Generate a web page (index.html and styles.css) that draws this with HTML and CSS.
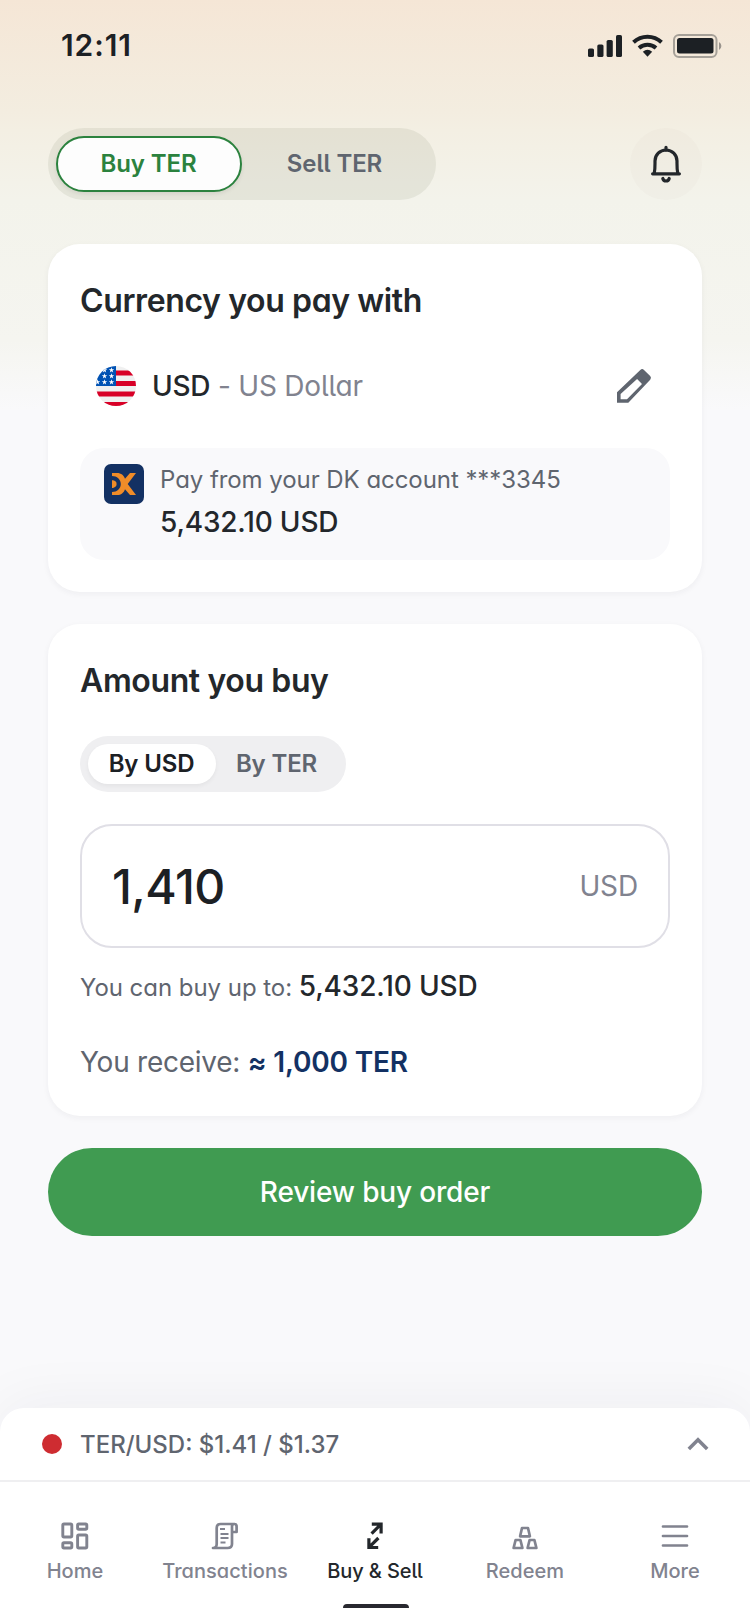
FILE: index.html
```html
<!DOCTYPE html>
<html lang="en">
<head>
<meta charset="utf-8">
<title>Buy TER</title>
<link rel="stylesheet" href="styles.css">
</head>
<body>
<div class="app">
  <header class="status">
    <span class="time">12:11</span>
    <svg class="status-icons" viewBox="0 0 136 26" width="136" height="26">
      <g fill="#1c2024">
        <rect x="0" y="15.500" width="6" height="8.500" rx="1.600"/>
        <rect x="9.300" y="11.500" width="6.200" height="12.500" rx="1.600"/>
        <rect x="18.600" y="7" width="6.200" height="17" rx="1.600"/>
        <rect x="28" y="2" width="6" height="22" rx="1.600"/>
      </g>
      <g fill="none" stroke="#1c2024" stroke-width="4">
        <path d="M45.500 9.300a20.600 20.600 0 0 1 28 0"/>
        <path d="M51 15a13 13 0 0 1 17 0"/>
      </g>
      <path d="M54.800 18.800a7.400 7.400 0 0 1 9.400 0l-4.700 5z" fill="#1c2024"/>
      <rect x="86" y="2" width="42.500" height="22" rx="5" fill="none" stroke="#1c2024" stroke-opacity=".36" stroke-width="2"/>
      <rect x="89" y="5" width="36.500" height="15.500" rx="2.500" fill="#1c2024"/>
      <path d="M131 9v8q2.400-1.500 2.400-4t-2.400-4z" fill="#1c2024" fill-opacity=".42"/>
    </svg>
  </header>

  <main class="content">
    <div class="topbar">
      <div class="tabs">
        <button class="tab tab-active">Buy TER</button>
        <button class="tab">Sell TER</button>
      </div>
      <button class="bell" aria-label="Notifications">
        <svg viewBox="0 0 36 40" width="36" height="40" fill="none" stroke="#23272b" stroke-width="3.200" stroke-linecap="round" stroke-linejoin="round">
          <path d="M18 3.300v3M4.600 29.800h26.800M6.200 29.500C7.200 25 7 22 7 17a11 11 0 0 1 22 0c0 5-.2 8 .8 12.500"/>
          <path d="M14.800 34.500a3.300 3.300 0 0 0 6.400 0"/>
        </svg>
      </button>
    </div>

    <section class="card">
      <h2 class="title">Currency you pay with</h2>
      <div class="currency">
        <svg class="flag" viewBox="0 0 40 40" width="40" height="40">
          <defs><clipPath id="round"><circle cx="20" cy="20" r="20"/></clipPath></defs>
          <g clip-path="url(#round)">
            <rect width="40" height="40" fill="#f0f0f0"/>
            <path d="M20 4.500h20v5H20zM20 15h20v5H20zM0 25.500h40v5H0zM0 36h40v4H0z" fill="#d80027"/>
            <rect width="20" height="20" fill="#0052b4"/>
            <path id="star" d="M15.500 1.300l.65 2h2.100l-1.700 1.200.65 2-1.700-1.200-1.700 1.200.65-2-1.700-1.200h2.100z" fill="#fff"/>
            <use href="#star" y="6"/><use href="#star" y="12"/>
            <use href="#star" x="-7" y="0"/><use href="#star" x="-7" y="6"/><use href="#star" x="-7" y="12"/>
            <use href="#star" x="-14" y="12"/>
          </g>
        </svg>
        <p class="currency-name"><b>USD</b> - US Dollar</p>
        <svg class="pencil" viewBox="0 0 36 36" width="36" height="36">
          <path fill-rule="evenodd" d="M1 24.300L24.300 1.900q1.900-1.600 3.700 0L34.200 8q1.600 1.900 0 3.700L12.300 34.700H1zM4.600 26v5.200H11L26 15.900 21.100 11z" fill="#5f656f"/>
        </svg>
      </div>
      <div class="account">
        <svg viewBox="0 0 40 40" width="40" height="40">
          <rect width="40" height="40" rx="7" fill="#133163"/>
          <g fill="#f08c28">
            <path d="M8 9h5c4.200 0 6.800 2.300 8 5.800L26 9h6l-8.300 11L32 31h-6l-5-5.800C19.800 28.700 17.200 31 13 31H8v-3c5 0 8.800-3.400 8.800-8S13 12 8 12z"/>
            <path d="M8 16.300h1q3.600.6 3.600 3.800t-3.600 3.800H8z"/>
          </g>
        </svg>
        <div>
          <p class="account-from">Pay from your DK account ***3345</p>
          <p class="account-sum">5,432.10 USD</p>
        </div>
      </div>
    </section>

    <section class="card card-amount">
      <h2 class="title">Amount you buy</h2>
      <div class="units">
        <button class="unit unit-active">By USD</button>
        <button class="unit">By TER</button>
      </div>
      <div class="field"><span class="value">1,410</span><span class="suffix">USD</span></div>
      <p class="limit">You can buy up to: <span>5,432.10 USD</span></p>
      <p class="receive">You receive: <b>≈ 1,000 TER</b></p>
    </section>

    <button class="submit">Review buy order</button>
  </main>

  <footer class="dock">
    <div class="rate">
      <i class="dot"></i>
      <span class="rate-text">TER/USD: $1.41 / $1.37</span>
      <svg viewBox="0 0 22 14" width="22" height="14" fill="none" stroke="#81838f" stroke-width="3.600"><path d="M1.800 12L11 2.800l9.200 9.200"/></svg>
    </div>
    <nav class="nav">
      <a class="item">
        <svg viewBox="0 0 32 32" width="32" height="32" fill="none" stroke="#81838f" stroke-width="2.900">
          <rect x="3.800" y="4" width="9" height="13" rx="1.200"/><rect x="18.600" y="4" width="9.200" height="5.300" rx="1.200"/>
          <rect x="3.800" y="22.700" width="9" height="5.300" rx="1.200"/><rect x="18.600" y="15" width="9.200" height="13" rx="1.200"/>
        </svg>Home</a>
      <a class="item">
        <svg viewBox="0 0 32 32" width="32" height="32" fill="none" stroke="#81838f" stroke-width="2.700" stroke-linejoin="round">
          <path d="M26 4H11.500Q7.700 4 7.700 8v16q0 4-3.700 4h14.500q4.500 0 4.500-4V6.500Q23 4 25.300 4t2.300 2.500V12H23"/>
          <path d="M11 9h5M11.500 14h8M11.500 18h8M11.500 22.500h5" stroke-width="2.200"/>
        </svg>Transactions</a>
      <a class="item item-active">
        <svg viewBox="0 0 32 32" width="32" height="32" fill="none" stroke="#23272b" stroke-width="3.200">
          <path d="M12.800 4.100h9.300v9.300M21.500 4.700l-8.900 8.900M19.200 27.500H9.900v-9.300M10.500 26.900l8.900-8.900"/>
        </svg>Buy &amp; Sell</a>
      <a class="item">
        <svg viewBox="0 0 32 32" width="32" height="32" fill="none" stroke="#81838f" stroke-width="2.700" stroke-linejoin="round">
          <path d="M13 8h6l1.900 8.300H11.100zM6.600 20h4.800l2 8H4.600zM20.600 20h4.800l2 8h-8.800z"/>
        </svg>Redeem</a>
      <a class="item">
        <svg viewBox="0 0 32 32" width="32" height="32" fill="none" stroke="#81838f" stroke-width="2.700" stroke-linecap="round"><path d="M4 6.500h24M4 16h24M4 25.500h24"/></svg>More</a>
    </nav>
  </footer>
</div>
</body>
</html>
```
FILE: styles.css
```css
* { box-sizing: border-box; margin: 0; padding: 0; }

body {
  font-family: Inter, "Liberation Sans", sans-serif;
  font-feature-settings: "cv11", "cv05";
  color: #23272b;
}

button { font: inherit; font-feature-settings: inherit; border: 0; background: none; color: inherit; }

.app {
  width: 750px;
  height: 1624px;
  display: flex;
  flex-direction: column;
  overflow: hidden;
  background: linear-gradient(#f5e6d6 0, #f3ede0 112px, #f3efe3 130px, #f3f3eb 200px, #f5f5f0 340px, #f9f9fb 410px);
}

.status {
  height: 128px;
  padding: 33px 26px 0 61px;
  display: flex;
  justify-content: space-between;
  align-items: flex-start;
}
.time { font-size: 30px; line-height: 25px; font-weight: 600; letter-spacing: .9px; color: #1c2024; }

.content { flex: 1; padding: 0 48px; }

.topbar { display: flex; justify-content: space-between; margin-bottom: 44px; }
.tabs {
  display: flex;
  width: 388px;
  height: 72px;
  padding: 8px;
  border-radius: 36px;
  background: rgba(80, 90, 60, .09);
}
.tab {
  width: 186px;
  padding: 0 1px 2px 0;
  border-radius: 28px;
  font-size: 24px;
  font-weight: 600;
  letter-spacing: -.1px;
  color: #5f656f;
}
.tab-active { border: 2px solid #2b823e; background: #fdfdfd; color: #2b823e; box-shadow: 0 2px 4px rgba(0, 0, 0, .08); }
.bell {
  width: 72px;
  height: 72px;
  border-radius: 50%;
  background: rgba(80, 60, 70, .02);
  display: flex;
  align-items: center;
  justify-content: center;
}

.card {
  height: 348px;
  padding: 32px;
  border-radius: 32px;
  background: #fff;
  box-shadow: 0 2px 6px rgba(30, 30, 60, .05);
  margin-bottom: 32px;
}
.card-amount { height: 492px; }
.title { padding-top: 1px; font-size: 32px; line-height: 47px; font-weight: 600; letter-spacing: -.38px; }

.currency { display: flex; align-items: center; height: 92px; margin: 16px 18px 16px 16px; }
.currency-name { flex: 1; margin-left: 16px; font-size: 28px; letter-spacing: -.22px; color: #81838f; }
.currency-name b { font-weight: 500; color: #23272b; }

.account {
  height: 112px;
  padding: 16px 24px;
  border-radius: 24px;
  background: #f9f9fb;
  display: flex;
  gap: 16px;
}
.account-from { font-size: 24px; line-height: 32px; letter-spacing: -.06px; color: #5f656f; }
.account-sum { font-size: 28px; line-height: 40px; margin-top: 6px; font-weight: 500; letter-spacing: -.18px; }

.units {
  display: flex;
  width: 266px;
  height: 56px;
  margin: 32px 0;
  padding: 8px;
  border-radius: 28px;
  background: #efeff1;
}
.unit {
  flex: 1;
  padding: 0 1px 1px 0;
  border-radius: 20px;
  font-size: 24px;
  font-weight: 600;
  letter-spacing: -.15px;
  color: #5f656f;
}
.unit-active { flex: none; width: 128px; background: #fff; color: #1c2024; box-shadow: 0 2px 4px rgba(0, 0, 0, .05); }

.field {
  height: 124px;
  padding: 0 30px;
  border: 2px solid #e0dfe6;
  border-radius: 32px;
  display: flex;
  align-items: center;
  justify-content: space-between;
}
.value { font-size: 48px; font-weight: 500; letter-spacing: -.6px; color: #1c2024; }
.suffix { font-size: 28px; letter-spacing: -.15px; color: #81838f; }
.limit { margin-top: 18px; font-size: 24px; line-height: 40px; letter-spacing: -.04px; color: #5f656f; }
.limit span { font-size: 28px; font-weight: 500; letter-spacing: -.15px; color: #23272b; }
.receive { margin-top: 34px; font-size: 28px; line-height: 40px; letter-spacing: -.25px; color: #5f656f; }
.receive b { font-weight: 600; letter-spacing: -.18px; color: #133163; }

.submit {
  width: 100%;
  height: 88px;
  border-radius: 44px;
  background: #409b51;
  color: #fff;
  font-size: 28px;
  font-weight: 500;
  letter-spacing: -.16px;
}

.dock {
  height: 216px;
  border-radius: 24px 24px 0 0;
  background: #fff;
  box-shadow: 0 -4px 60px rgba(30, 30, 50, .05);
}
.rate {
  height: 74px;
  padding: 0 41px 0 42px;
  border-bottom: 2px solid #efeff1;
  display: flex;
  align-items: center;
}
.dot { width: 20px; height: 20px; border-radius: 50%; background: #ce2c31; }
.rate-text { flex: 1; margin-left: 18px; font-size: 24px; font-weight: 450; letter-spacing: 0; color: #5f656f; }
.nav { display: grid; grid-template-columns: repeat(5, 1fr); height: 142px; padding-top: 38px; }
.item {
  position: relative;
  display: flex;
  flex-direction: column;
  align-items: center;
  gap: 7px;
  height: 88px;
  font-size: 20px;
  line-height: 24px;
  font-weight: 450;
  letter-spacing: .05px;
  color: #81838f;
}
.item-active { color: #23272b; font-weight: 500; letter-spacing: -.1px; }
.item-active::after {
  content: "";
  position: absolute;
  bottom: 0;
  left: 43px;
  width: 66px;
  height: 4px;
  border-radius: 4px 4px 0 0;
  background: #28282f;
}
```
